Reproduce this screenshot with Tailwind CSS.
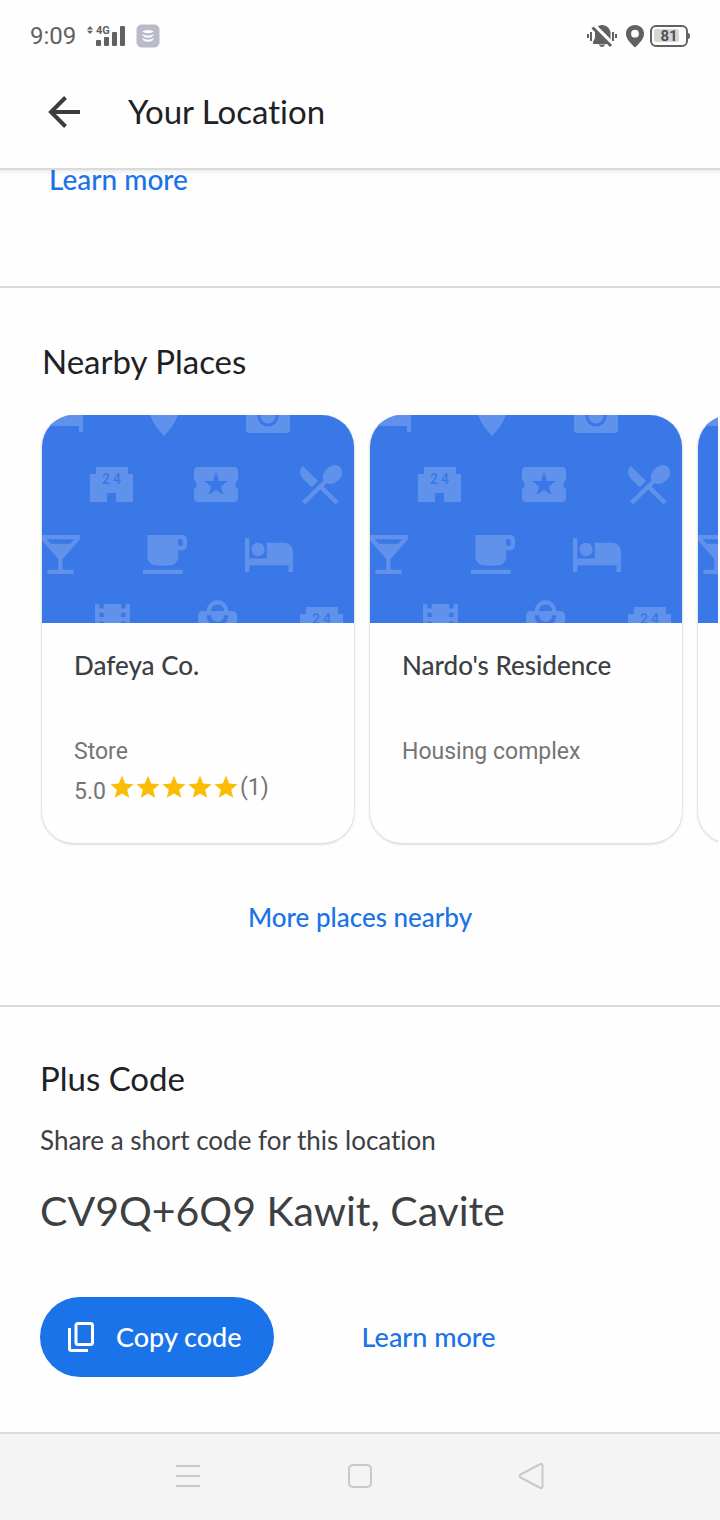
<!DOCTYPE html>
<html lang="en">
<head>
<meta charset="utf-8">
<meta name="viewport" content="width=device-width, initial-scale=1">
<title>Your Location</title>
<script src="https://cdn.jsdelivr.net/npm/@tailwindcss/browser@4"></script>
</head>
<body class="flex min-h-screen flex-col overflow-x-hidden bg-[#fefefe] font-['Lato','Roboto',sans-serif] text-[#3c4043] [font-variant-ligatures:none]">

<!-- Shared artwork -->
<svg class="hidden" aria-hidden="true">
  <symbol id="pattern" viewBox="0 0 312 208">
    <rect width="312" height="208" fill="#3b78e7"/>
    <g fill="#6092eb">
      <path d="M0 0H41V17H37V11H0Z"/>
      <path d="M108 0H136C133 8 128 15 122 21C116 15 111 8 108 0Z"/>
      <path d="M204 0H248V14Q248 18 244 18H208Q204 18 204 14Z"/>
      <g id="store">
        <path d="M54 52H86V59H91V87H74V78H65V87H48V59H54Z"/>
        <text x="60 71" y="69" font-family="Roboto, sans-serif" font-size="14" font-weight="500" fill="#3b78e7">24</text>
      </g>
      <path d="M156 52H192Q196 52 196 56V65A5 5 0 0 0 196 74V83Q196 87 192 87H156Q152 87 152 83V74A5 5 0 0 0 152 65V56Q152 52 156 52Z"/>
      <path fill="#3b78e7" d="M174 57L177 66H186L179 71.500L181.500 80L174 75L166.500 80L169 71.500L162 66H171Z"/>
      <path transform="translate(252 43.500) scale(2.2 2.15)" d="M8.100 13.340l2.830-2.830L3.910 3.500a4.008 4.008 0 0 0 0 5.660l4.190 4.180zm6.780-1.810c1.530.71 3.680.21 5.270-1.380 1.910-1.910 2.280-4.650.81-6.120-1.460-1.460-4.200-1.100-6.120.81-1.590 1.590-2.090 3.740-1.380 5.270L3.700 19.870l1.410 1.410L12 14.410l6.880 6.880 1.410-1.410L13.410 13l1.470-1.470z"/>
      <path transform="translate(-7.600 113.500) scale(2.170)" d="M21 5V3H3v2l8 9v5H6v2h12v-2h-5v-5l8-9zM7.430 7L5.660 5h12.690l-1.780 2H7.430z"/>
      <path transform="translate(96.600 113.500) scale(2.2 2.170)" d="M20 3H4v10c0 2.210 1.790 4 4 4h6c2.210 0 4-1.790 4-4v-3h2c1.110 0 2-.89 2-2V5c0-1.110-.89-2-2-2zm0 5h-2V5h2v3zM2 21h18v-2H2v2z"/>
      <path transform="translate(200.800 112) scale(2.180 2.250)" d="M7 13c1.660 0 3-1.340 3-3S8.660 7 7 7s-3 1.340-3 3 1.340 3 3 3zm12-6h-8v7H3V5H1v15h2v-3h18v3h2v-9c0-2.210-1.790-4-4-4z"/>
      <path transform="translate(44.300 182.500) scale(2.180)" d="M18 3v2h-2V3H8v2H6V3H4v18h2v-2h2v2h8v-2h2v2h2V3h-2zM8 17H6v-2h2v2zm0-4H6v-2h2v2zm0-4H6V7h2v2zm10 8h-2v-2h2v2zm0-4h-2v-2h2v2zm0-4h-2V7h2v2z"/>
      <path transform="translate(149.500 183) scale(2.170)" d="M19 6h-2c0-2.760-2.240-5-5-5S7 3.240 7 6H5c-1.100 0-1.990.9-1.990 2L3 20c0 1.100.9 2 2 2h14c1.100 0 2-.9 2-2V8c0-1.100-.9-2-2-2zm-7-3c1.660 0 3 1.340 3 3H9c0-1.660 1.340-3 3-3zm0 10c-2.760 0-5-2.240-5-5h2c0 1.660 1.340 3 3 3s3-1.340 3-3h2c0 2.760-2.240 5-5 5z"/>
      <use href="#store" x="210" y="140"/>
    </g>
    <circle cx="226" cy="1" r="9" fill="none" stroke="#3b78e7" stroke-width="3"/>
  </symbol>
  <symbol id="star" viewBox="0 0 24 24">
    <path fill="#fbbc04" d="M12 .8L15.200 8.600L23.500 9.200L17.200 14.700L19.200 22.800L12 18.400L4.800 22.800L6.800 14.700L.5 9.200L8.800 8.600Z"/>
  </symbol>
</svg>

<header class="relative z-10 border-b-2 border-[#dadada] bg-[#fefefe] shadow-[0_2px_4px_rgba(0,0,0,0.08)]">
  <div class="flex h-[72px] items-center justify-between pr-[30px] pl-[30px] font-['Roboto',sans-serif] text-[#616161]">
    <div class="flex items-center">
      <span class="text-2xl">9:09</span>
      <svg class="ml-[10px] h-6 w-[42px]" viewBox="0 0 42 24" fill="#616161" role="img" aria-label="4G signal">
        <path d="M4 2L7 5.500H1ZM4 10L1 6.800H7Z"/>
        <text x="10" y="10" font-family="Roboto, sans-serif" font-size="11" font-weight="700">4G</text>
        <rect x="10" y="16" width="5" height="6" rx="1"/><rect x="18" y="13" width="5" height="9" rx="1"/><rect x="26" y="8" width="5" height="14" rx="1"/><rect x="34" y="2" width="5" height="20" rx="1"/>
      </svg>
      <svg class="ml-2 size-6" viewBox="0 0 24 24" aria-hidden="true">
        <rect x=".5" y=".5" width="23" height="23" rx="5" fill="#b9bbc8"/>
        <path fill="#fff" d="M6 7.500Q12 4.500 18 7.500Q12 11 6 7.500ZM6 10Q12 13.500 18 10L16.500 12.500Q12 15 7.500 12.500ZM6 14Q12 17.500 18 14L16.500 16.500Q12 19 7.500 16.500Z"/>
      </svg>
    </div>
    <div class="flex items-center">
      <svg class="h-6 w-[32px]" viewBox="0 0 32 24" fill="#616161" role="img" aria-label="Muted">
        <path d="M0 10h2v4H0zM3 8h2v9H3zM28 10h2v4h-2zM25 8h2v9h-2z"/>
        <path d="M15 1C20 1 23.500 5 23.500 9V14L25 18V20H6V18L8 14V9C8 5 10 1 15 1ZM11.500 20.500H18.500Q15 25.500 11.500 20.500Z"/>
        <path d="M6 1L27 22" stroke="#fefefe" stroke-width="5"/>
        <path d="M5.500 3.500L24 22" stroke="#616161" stroke-width="3"/>
      </svg>
      <svg class="ml-[6px] h-6 w-5" viewBox="0 0 20 24" role="img" aria-label="Location on">
        <path fill="#616161" fill-rule="evenodd" d="M10 1C4.800 1 1 4.800 1 9.700C1 15 6 19.500 10 23.500C14 19.500 19 15 19 9.700C19 4.800 15.200 1 10 1ZM10 5.800A3.900 3.900 0 1 1 10 13.600A3.900 3.900 0 1 1 10 5.800Z"/>
      </svg>
      <svg class="ml-[5px] h-6 w-10" viewBox="0 0 40 24" role="img" aria-label="Battery 81 percent">
        <rect x="1" y="2" width="36" height="20" rx="5" fill="none" stroke="#616161" stroke-width="2"/>
        <rect x="4" y="5" width="25" height="13" rx="2" fill="#d6d6d6"/>
        <path d="M38 9q2 0 2 3t-2 3z" fill="#616161"/>
        <text x="19" y="17" text-anchor="middle" font-family="Roboto, sans-serif" font-size="15" font-weight="700" fill="#505050">81</text>
      </svg>
    </div>
  </div>
  <div class="flex h-24 items-start pl-12 pt-5">
    <button type="button" aria-label="Back" class="mt-1 size-8">
      <svg class="size-8" viewBox="0 0 32 32" fill="none" stroke="#3c3c3c" stroke-width="4"><path d="M32 16H3M17.500 1.500L3 16L17.500 30.500"/></svg>
    </button>
    <h1 class="ml-12 text-[33px] leading-[38px] text-[#202124]">Your Location</h1>
  </div>
</header>

<main class="grow">
  <section class="border-b-2 border-[#dadada] pb-[91px] pl-[49px]">
    <a href="#" class="-mt-[7px] block w-fit text-[28px] leading-8 font-medium text-[#1a73e8]">Learn more</a>
  </section>

  <section class="border-b-2 border-[#dadada] pt-[53px] pb-[68px]">
    <h2 class="pl-[42px] text-[33px] leading-10 text-[#202124]">Nearby Places</h2>
    <div class="mt-[34px] mr-[2px] flex gap-4 overflow-hidden pb-1 pl-[42px]">
      <article class="h-[428px] w-[312px] shrink-0 overflow-hidden rounded-[32px] bg-[#fefefe] shadow-[0_1px_2px_1px_rgba(0,0,0,0.12)]">
        <svg class="h-[208px] w-full" aria-hidden="true"><use href="#pattern"/></svg>
        <div class="px-8 pt-[26px]">
          <h3 class="text-[26px] leading-8 font-medium">Dafeya Co.</h3>
          <div class="mt-[55px] font-['Roboto',sans-serif] text-[23px] leading-8 text-[#757575]">
            <p>Store</p>
            <p class="mt-1 flex items-start">
              <span class="mr-1 pt-1">5.0</span>
              <span class="mt-[3px] mr-[2px] flex gap-[2px]"><svg class="size-6" aria-hidden="true"><use href="#star"/></svg><svg class="size-6" aria-hidden="true"><use href="#star"/></svg><svg class="size-6" aria-hidden="true"><use href="#star"/></svg><svg class="size-6" aria-hidden="true"><use href="#star"/></svg><svg class="size-6" aria-hidden="true"><use href="#star"/></svg></span>
              <span>(1)</span>
            </p>
          </div>
        </div>
      </article>
      <article class="h-[428px] w-[312px] shrink-0 overflow-hidden rounded-[32px] bg-[#fefefe] shadow-[0_1px_2px_1px_rgba(0,0,0,0.12)]">
        <svg class="h-[208px] w-full" aria-hidden="true"><use href="#pattern"/></svg>
        <div class="px-8 pt-[26px]">
          <h3 class="text-[26px] leading-8 font-medium">Nardo's Residence</h3>
          <p class="mt-[55px] font-['Roboto',sans-serif] text-[23px] leading-8 text-[#757575]">Housing complex</p>
        </div>
      </article>
      <article class="h-[428px] w-[312px] shrink-0 overflow-hidden rounded-[32px] bg-[#fefefe] shadow-[0_1px_2px_1px_rgba(0,0,0,0.12)]">
        <svg class="h-[208px] w-full" aria-hidden="true"><use href="#pattern"/></svg>
      </article>
    </div>
    <button type="button" class="mx-auto mt-[50px] block text-[26px] leading-10 font-medium text-[#1a73e8]">More places nearby</button>
  </section>

  <section class="px-10 pt-[51px] pb-[55px]">
    <h2 class="text-[33px] leading-10 text-[#202124]">Plus Code</h2>
    <p class="mt-[26px] text-[26px] leading-8">Share a short code for this location</p>
    <p class="mt-[31px] text-[41px] leading-12">CV9Q+6Q9 Kawit, Cavite</p>
    <div class="mt-[62px] flex items-center gap-[88px]">
      <button type="button" class="flex h-20 items-center gap-[22px] rounded-full bg-[#1a73e8] pr-8 pl-7 text-[27px] leading-8 font-medium text-white">
        <svg class="h-[30px] w-[26px]" viewBox="0 0 26 30" fill="none" stroke="#fff" stroke-width="3" aria-hidden="true"><rect x="8" y="1.500" width="16.500" height="21" rx="2"/><path d="M1.500 6V26.500Q1.500 28.500 3.500 28.500H20"/></svg>
        Copy code
      </button>
      <a href="#" class="text-[27px] leading-8 font-medium text-[#1a73e8]">Learn more</a>
    </div>
  </section>
</main>

<nav aria-label="System" class="flex h-[88px] items-center justify-center gap-[148px] border-t-2 border-[#dadada] bg-[#f4f4f4] pb-[2px]">
  <button type="button" aria-label="Recent apps"><svg class="size-6" viewBox="0 0 24 24" stroke="#c9c9c9" stroke-width="2"><path d="M0 2H24M0 12H24M0 22H24"/></svg></button>
  <button type="button" aria-label="Home"><svg class="size-6" viewBox="0 0 24 24" fill="none" stroke="#c9c9c9" stroke-width="2"><rect x="1" y="1" width="22" height="22" rx="4"/></svg></button>
  <button type="button" aria-label="Back"><svg class="size-6 overflow-visible" viewBox="0 0 24 24" fill="none" stroke="#c9c9c9" stroke-width="2" stroke-linejoin="round"><path d="M.5 10.500L20.500 0Q22.500-.5 22.500 1.500V22.500Q22.500 24.500 20.500 24L.5 13.500Q-1.500 12 .5 10.500Z"/></svg></button>
</nav>
</body>
</html>
